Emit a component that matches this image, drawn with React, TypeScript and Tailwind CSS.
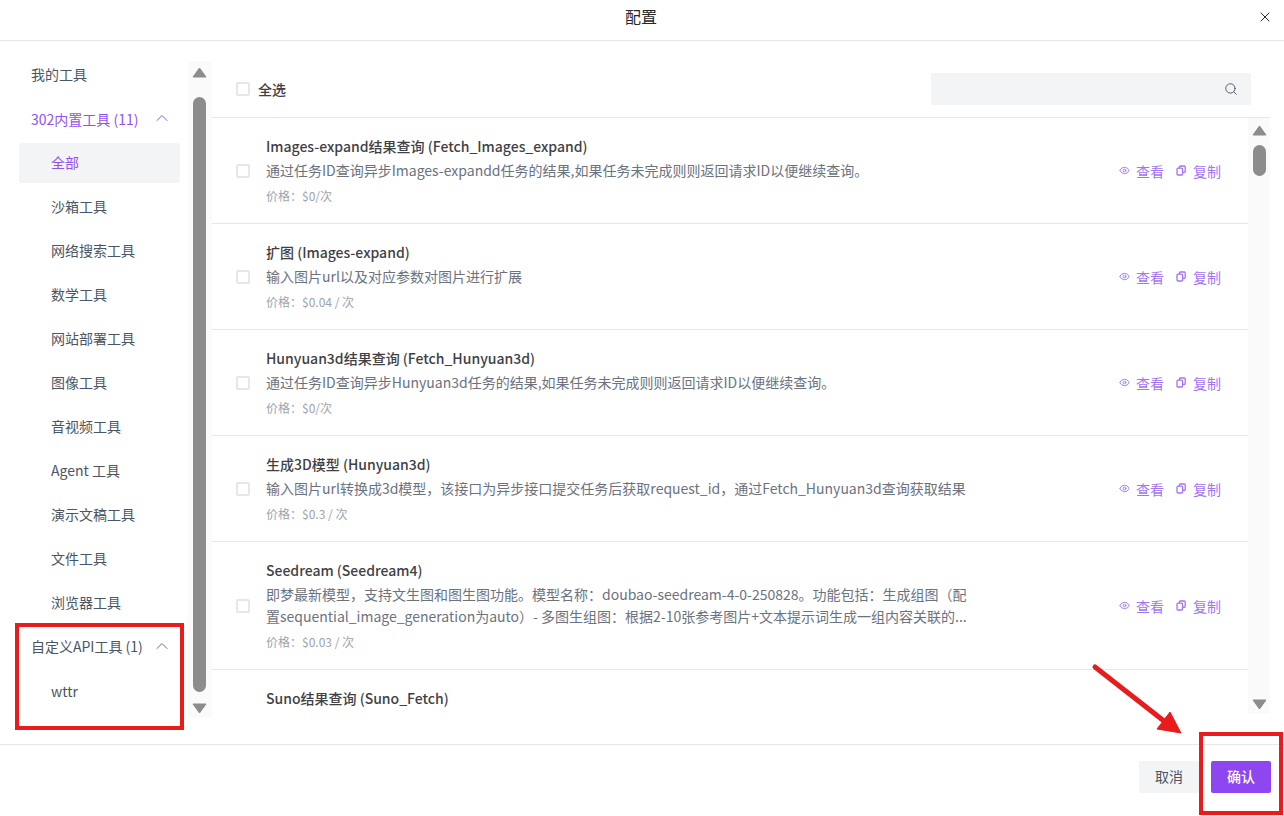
import { ChevronUp, Eye, Search, X } from "lucide-react";

const subTools = ["全部", "沙箱工具", "网络搜索工具", "数学工具", "网站部署工具", "图像工具", "音视频工具", "Agent 工具", "演示文稿工具", "文件工具", "浏览器工具"];

type Tool = { title: string; desc?: string; price?: string };

const tools: Tool[] = [
  {
    title: "Images-expand结果查询 (Fetch_Images_expand)",
    desc: "通过任务ID查询异步Images-expandd任务的结果,如果任务未完成则则返回请求ID以便继续查询。",
    price: "价格：$0/次",
  },
  {
    title: "扩图 (Images-expand)",
    desc: "输入图片url以及对应参数对图片进行扩展",
    price: "价格：$0.04 / 次",
  },
  {
    title: "Hunyuan3d结果查询 (Fetch_Hunyuan3d)",
    desc: "通过任务ID查询异步Hunyuan3d任务的结果,如果任务未完成则则返回请求ID以便继续查询。",
    price: "价格：$0/次",
  },
  {
    title: "生成3D模型 (Hunyuan3d)",
    desc: "输入图片url转换成3d模型，该接口为异步接口提交任务后获取request_id，通过Fetch_Hunyuan3d查询获取结果",
    price: "价格：$0.3 / 次",
  },
  {
    title: "Seedream (Seedream4)",
    desc: "即梦最新模型，支持文生图和图生图功能。模型名称：doubao-seedream-4-0-250828。功能包括：生成组图（配置sequential_image_generation为auto）- 多图生组图：根据2-10张参考图片+文本提示词生成一组内容关联的...",
    price: "价格：$0.03 / 次",
  },
  { title: "Suno结果查询 (Suno_Fetch)" },
];

const Checkbox = () => <span className="h-[14px] w-[14px] shrink-0 rounded-[2px] border-2 border-[#e5e7eb] bg-white" />;

const Triangle = ({ down }: { down?: boolean }) => (
  <svg width="15" height="11" viewBox="0 0 15 11" className="shrink-0">
    <path d={down ? "M1 1h13L7.5 10z" : "M7.5 1L14 10H1z"} fill="#8c8c8c" stroke="#8c8c8c" strokeLinejoin="round" />
  </svg>
);

const CopyIcon = () => (
  <svg width="11" height="11" viewBox="0 0 11 11" fill="none" stroke="#a274f2" strokeWidth="1.3">
    <rect x="1" y="3.2" width="5.6" height="6.8" rx="1" />
    <path d="M3.4 3.2V1.9c0-.5.4-.9.9-.9h4c.5 0 .9.4.9.9v4.6c0 .5-.4.9-.9.9H6.6" />
  </svg>
);

const App = () => {
  return (
    <div className="relative flex h-[816px] w-[1284px] flex-col overflow-hidden bg-white font-['Noto_Sans_CJK_SC','Noto_Sans',sans-serif] text-sm">
      <header className="flex h-[41px] shrink-0 items-center justify-between border-b border-[#e5e7eb] pb-[6px] pl-[625px] pr-[11px]">
        <span className="mb-[2px] text-base leading-6 text-[#27272a]">配置</span>
        <X size={16} strokeWidth={1.5} className="text-[#27272a]" />
      </header>

      <div className="flex h-[703px] shrink-0">
        <aside className="w-[188px] shrink-0 pl-[19px] pr-2 pt-[14px] leading-[22px] text-[#4b5563]">
          <div className="flex h-10 items-center px-3 pb-[2px]">我的工具</div>
          <div className="mt-1 flex h-10 items-center justify-between pl-3 pr-[8px] text-[#9352f0]">
            <span>302内置工具 (11)</span>
            <ChevronUp size={20} strokeWidth={1.2} className="mb-[2px]" />
          </div>
          {subTools.map((name, i) => (
            <div
              key={name}
              className={
                i === 0
                  ? "mt-1 flex h-10 items-center rounded-[3px] bg-[#f3f4f6] pb-[2px] pl-8 text-[#9352f0]"
                  : "mt-1 flex h-10 items-center pb-[2px] pl-8"
              }
            >
              {name}
            </div>
          ))}
          <div className="mt-1 flex h-10 items-center justify-between pb-[2px] pl-3 pr-[8px]">
            <span>自定义API工具 (1)</span>
            <ChevronUp size={20} strokeWidth={1.2} className="text-[#6b7280]" />
          </div>
          <div className="mt-1 flex h-10 items-center pl-8">wttr</div>
        </aside>

        <div className="mt-5 flex h-[657px] w-6 shrink-0 flex-col bg-[#fafafa] pl-1">
          <div className="mt-[6px]">
            <Triangle />
          </div>
          <div className="ml-px mt-[19px] h-[595px] w-[13px] rounded-full bg-[#8c8c8c]" />
          <div className="mt-[11px]">
            <Triangle down />
          </div>
        </div>

        <main className="mt-5 flex h-[653px] w-[1058px] shrink-0 flex-col">
          <div className="flex h-[57px] shrink-0 items-center justify-between border-b border-[#e5e7eb] pl-6 pr-[19px]">
            <label className="flex items-center gap-2 font-medium leading-[22px] text-[#3f3f46]">
              <Checkbox />
              <span>全选</span>
            </label>
            <div className="flex h-8 w-80 items-center justify-end rounded-[2px] bg-[#f3f4f6] pr-[13px]">
              <Search size={14} strokeWidth={1.6} className="text-[#4b5563]" />
            </div>
          </div>

          <div className="flex min-h-0 flex-1">
            <div className="w-[1036px] shrink-0 overflow-hidden">
              {tools.map((t) => (
                <div key={t.title} className="flex items-center border-b border-[#e5e7eb] pb-[17px] pl-6 pr-[27px] pt-[17px]">
                  {t.desc && <Checkbox />}
                  <div className={t.desc ? "ml-4 w-[712px] shrink-0" : "ml-[30px] w-[712px] shrink-0"}>
                    <div className="font-medium leading-[22px] text-[#3f3f46]">{t.title}</div>
                    {t.desc && <div className="mt-[2px] leading-[22px] text-[#6b7280]">{t.desc}</div>}
                    {t.price && <div className="mt-[5px] text-xs leading-5 text-[#9ca3af]">{t.price}</div>}
                  </div>
                  {t.desc && (
                    <div className="ml-auto flex items-center leading-[22px] text-[#a274f2]">
                      <Eye size={11} strokeWidth={2} />
                      <span className="ml-[6px]">查看</span>
                      <span className="ml-3">
                        <CopyIcon />
                      </span>
                      <span className="ml-[6px]">复制</span>
                    </div>
                  )}
                </div>
              ))}
            </div>
            <div className="flex w-[22px] shrink-0 flex-col bg-[#fafafa] pl-1">
              <div className="mt-[7px]">
                <Triangle />
              </div>
              <div className="ml-px mt-[9px] h-[31px] w-[13px] rounded-full bg-[#8c8c8c]" />
              <div className="mt-[523px]">
                <Triangle down />
              </div>
            </div>
          </div>
        </main>
      </div>

      <footer className="flex flex-1 items-start justify-end gap-3 border-t border-[#e5e7eb] pr-[13px] pt-4">
        <button className="h-8 w-[60px] rounded-[2px] bg-[#f3f4f6] pb-[2px] leading-[22px] text-[#4b5563]">取消</button>
        <button className="h-8 w-[60px] rounded-[2px] bg-[#8e47f0] pb-[2px] font-medium leading-[22px] text-white">确认</button>
      </footer>

      <div className="absolute left-[15px] top-[623px] h-[107px] w-[169px] border-4 border-[#e81c1c]" />
      <div className="absolute left-[1199px] top-[732px] h-[83px] w-[84px] border-4 border-[#e81c1c]" />
      <svg className="absolute left-[1088px] top-[660px]" width="100" height="80" viewBox="0 0 100 80">
        <path d="M7 7L76 61" stroke="#e81c1c" strokeWidth="5" strokeLinecap="round" />
        <path d="M82 52L93 73L69 69z" fill="#e81c1c" stroke="#e81c1c" strokeLinejoin="round" />
      </svg>
    </div>
  );
};

export default App;
